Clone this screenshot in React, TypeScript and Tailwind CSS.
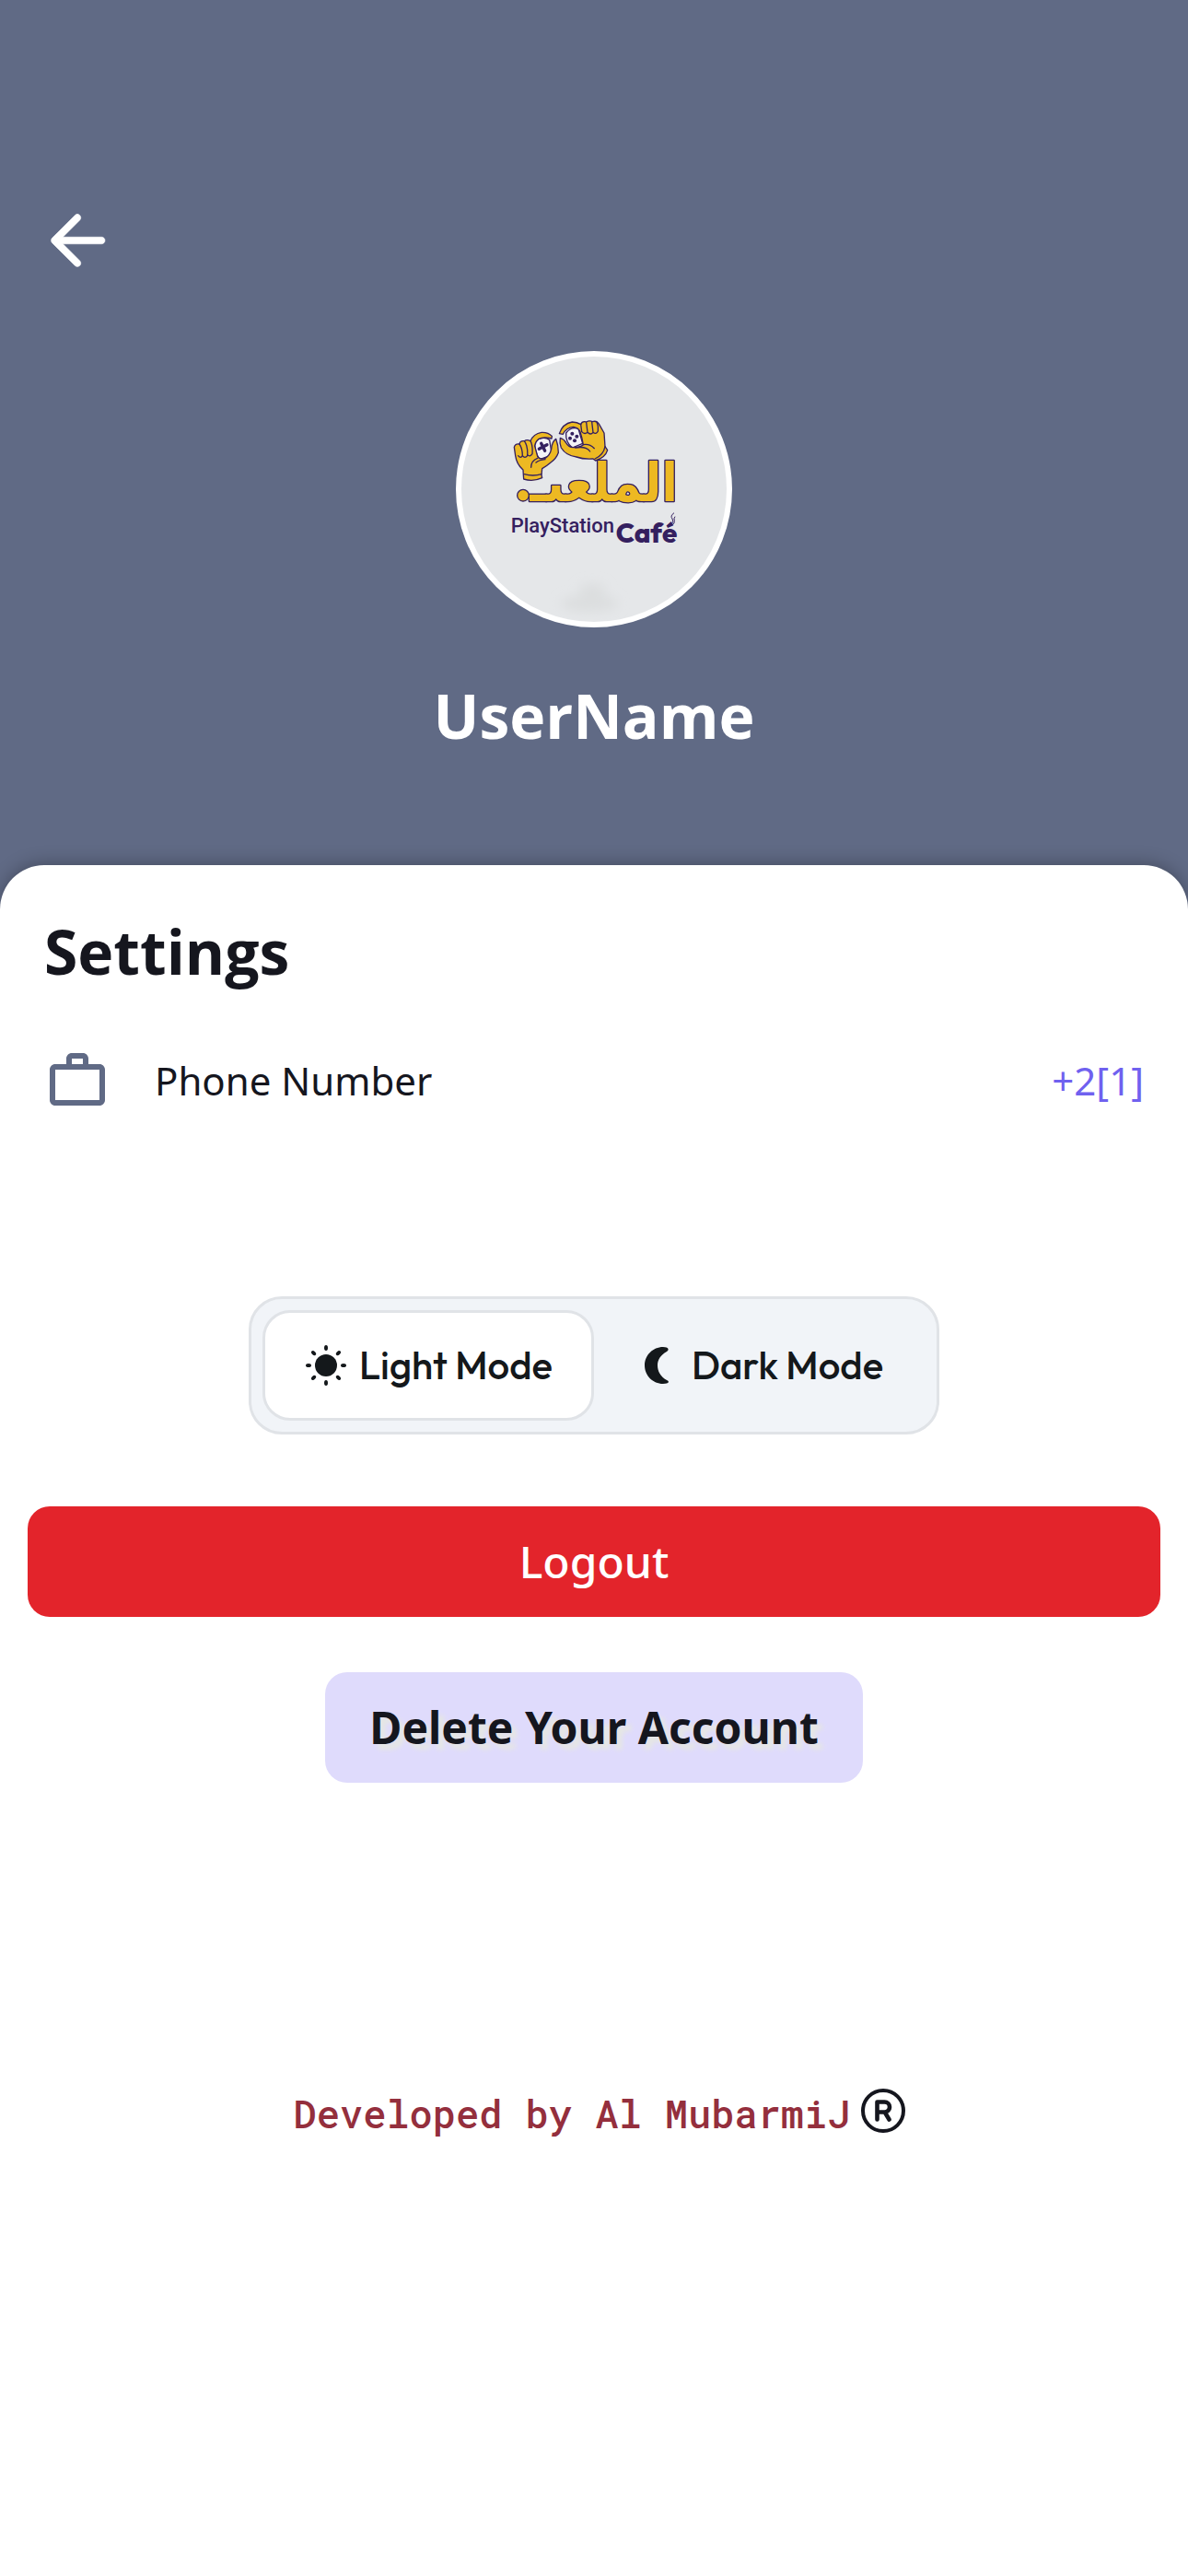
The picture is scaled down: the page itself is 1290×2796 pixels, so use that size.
import { useState } from 'react';

function CafeLogo() {
    return (
        <svg viewBox="63 51 864 864" className="w-full h-full" role="img" aria-label="الملعب PlayStation Café">
            <defs>
                <filter id="smudge" x="-50%" y="-50%" width="200%" height="200%">
                    <feGaussianBlur stdDeviation="18" />
                </filter>
            </defs>
            <rect x="63" y="51" width="864" height="864" fill="#e5e7e9" />
            <g fill="#dcdedf" filter="url(#smudge)">
                <ellipse cx="480" cy="855" rx="95" ry="28" />
                <ellipse cx="490" cy="810" rx="45" ry="20" />
            </g>

            {/* Left hand */}
            <g stroke="#34205f" strokeWidth="4" strokeLinejoin="round" strokeLinecap="round">
                <path fill="#f3f3f7" d="M302 326Q330 308 350 322L358 372L318 386Q300 360 302 326Z" />
                <path fill="#edb922" d="M265 436L264 420Q243 402 239 374L235 346Q238 334 252 336Q254 324 268 326Q276 320 288 326Q298 302 324 298Q346 297 358 310L357 318Q330 310 314 320Q304 328 302 342L311 376Q318 388 336 382Q352 372 356 352Q358 328 371 319Q379 340 379 364Q372 384 354 396Q340 408 326 416L324 436L326 446Q296 460 266 450Z" />
                <path fill="none" d="M252 336Q262 350 262 374Q256 384 248 374M268 326Q280 342 278 374Q270 384 262 374M288 326Q296 340 294 368Q286 380 278 370M311 382Q290 390 290 412M336 386Q316 388 306 396M268 434Q296 442 324 434" />
            </g>
            <path d="M316 352L342 338M323 334L335 358" stroke="#34205f" strokeWidth="10" strokeLinecap="round" />

            {/* Right hand */}
            <g stroke="#34205f" strokeWidth="4" strokeLinejoin="round" strokeLinecap="round">
                <path fill="#f3f3f7" d="M404 300Q420 278 444 286L458 334L424 348Q402 330 404 300Z" />
                <path fill="#edb922" d="M382 302Q392 270 424 264Q440 264 452 272Q456 260 470 264Q480 258 490 263Q504 258 512 272L528 300L531 344L539 356Q532 380 500 390L492 384Q460 386 438 378Q404 374 388 348Q382 332 385 316Q398 320 404 332Q414 350 434 346Q452 346 460 338Q456 314 450 296Q444 282 428 280Q404 282 394 304Z" />
                <path fill="none" d="M452 272L455 296Q464 306 474 298L470 266M474 298Q484 308 492 298L488 264M492 298Q502 306 508 294Q510 278 504 264M460 338Q480 334 496 350M434 348Q470 342 482 360M531 344Q526 372 498 384" />
            </g>
            <g fill="#34205f">
                <circle cx="424" cy="302" r="6" />
                <circle cx="439" cy="311" r="6" />
                <circle cx="417" cy="317" r="6" />
                <circle cx="432" cy="325" r="6" />
            </g>

            {/* Wordmark, the ball is the dot of the last letter */}
            <text
                x="768"
                y="522"
                direction="rtl"
                fontSize="172"
                fontWeight="700"
                fill="#edb922"
                stroke="#34205f"
                strokeWidth="8"
                strokeLinejoin="round"
                paintOrder="stroke"
                className="font-['DejaVu_Sans_Condensed','DejaVu_Sans',sans-serif]"
            >
                الملعٮـ
            </text>
            <circle cx="264" cy="503" r="19" fill="#edb922" stroke="#34205f" strokeWidth="4" />
            <text x="224" y="624" fontSize="66" fontWeight="500" fill="#34205f" className="font-['Roboto',sans-serif]">
                PlayStation
            </text>
            <text x="566" y="656" fontSize="88" fontWeight="800" fill="#34205f" className="font-['Outfit','Lato',sans-serif]">
                Café
            </text>
            <path d="M756 560Q742 570 750 579Q757 588 746 600M759 572Q754 578 757 586Q758 594 750 600" fill="none" stroke="#34205f" strokeWidth="3" />
        </svg>
    );
}

function SunIcon() {
    return (
        <svg viewBox="0 0 48 48" className="w-12 h-12" fill="#14181b" aria-hidden="true">
            <circle cx="24" cy="24" r="12" />
            {[0, 45, 90, 135, 180, 225, 270, 315].map((angle) => (
                <ellipse key={angle} cx="24" cy="5" rx="2" ry="3" transform={`rotate(${angle} 24 24)`} />
            ))}
        </svg>
    );
}

function MoonIcon() {
    return (
        <svg viewBox="2 0 48 48" className="w-12 h-12" fill="#14181b" aria-hidden="true">
            <path d="M31 4C20 4 11 13 11 24S20 44 31 44C38 44 38 41 35 40C28 36 25 30 25 24S28 13 35 9C38 7 37 4 31 4Z" />
        </svg>
    );
}

export default function ProfilePage() {
    const [mode, setMode] = useState('light');

    const modes = [
        { id: 'light', label: 'Light Mode', icon: <SunIcon /> },
        { id: 'dark', label: 'Dark Mode', icon: <MoonIcon /> },
    ];

    return (
        <div className="min-h-screen flex flex-col bg-[#606a85] font-['Noto_Sans','Open_Sans',sans-serif] text-[#15161e]">
            {/* Header */}
            <header className="flex flex-col items-center pt-[216px] pb-[118px]">
                <button aria-label="Back" className="self-start ml-[39px]">
                    <svg viewBox="0 0 24 24" className="block w-[90px] h-[90px]" fill="#fff">
                        <path d="M19 11H7.83l4.88-4.88c.39-.39.39-1.03 0-1.42a1 1 0 0 0-1.41 0l-6.59 6.59c-.39.39-.39 1.02 0 1.41l6.59 6.59c.39.39 1.02.39 1.41 0s.39-1.02 0-1.41L7.83 13H19c.55 0 1-.45 1-1s-.45-1-1-1z" stroke="#fff" strokeWidth="0.15" />
                    </svg>
                </button>
                <div className="w-[300px] h-[300px] mt-[75px] rounded-full border-6 border-white bg-white overflow-hidden">
                    <CafeLogo />
                </div>
                <h1 className="mt-[50px] font-['Open_Sans',sans-serif] text-[66px] leading-[90px] font-bold text-white">UserName</h1>
            </header>

            {/* Settings */}
            <main className="grow flex flex-col items-center bg-white rounded-t-[48px] pt-12 shadow-[0_-3px_18px_rgba(0,0,0,0.25)]">
                <h2 className="self-stretch px-12 font-['Open_Sans',sans-serif] text-[66px] leading-[90px] font-bold">Settings</h2>
                <div className="self-stretch flex items-center gap-12 px-12 mt-[60px] text-[42px] leading-[60px]">
                    <svg viewBox="0 0 24 24" className="w-[72px] h-[72px]" fill="#606a85" aria-hidden="true">
                        <path
                            fillRule="evenodd"
                            d="M14 6V4h-4v2zM4 8v11h16V8zm16-2c1.11 0 2 .89 2 2v11c0 1.11-.89 2-2 2H4c-1.11 0-2-.89-2-2V8c0-1.11.89-2 2-2h4V4c0-1.11.89-2 2-2h4c1.11 0 2 .89 2 2v2z"
                        />
                    </svg>
                    <span className="grow">Phone Number</span>
                    <span className="text-[#6f61ef]">+2[1]</span>
                </div>

                {/* Theme switch */}
                <div className="flex w-[750px] mt-[198px] p-3 rounded-[36px] border-3 border-[#e0e3e7] bg-[#f1f4f8] font-['Outfit','Lato',sans-serif] text-[#14181b]">
                    {modes.map((item) => (
                        <button
                            key={item.id}
                            aria-pressed={mode === item.id}
                            onClick={() => setMode(item.id)}
                            className={`flex-1 h-[120px] flex items-center justify-center gap-3 rounded-[30px] border-3 text-[42px] leading-[54px] font-medium ${mode === item.id ? 'bg-white border-[#e0e3e7]' : 'border-transparent'}`}
                        >
                            {item.icon}
                            <span>{item.label}</span>
                        </button>
                    ))}
                </div>

                {/* Account actions */}
                <div className="self-stretch flex flex-col items-center gap-[60px] px-[30px] mt-[78px] text-[48px] leading-[66px]">
                    <button className="w-full h-[120px] rounded-3xl bg-[#e3242b] font-medium text-white">Logout</button>
                    <button className="h-[120px] px-12 rounded-3xl bg-[#dfdbfc] font-bold [text-shadow:6px_6px_5px_#e6e7e3]">
                        Delete Your Account
                    </button>
                </div>

                <footer className="flex items-start gap-3 mt-[332px] pl-3 font-['Roboto_Mono','DejaVu_Sans_Mono',monospace] text-[42px] leading-[54px] font-medium text-[#942f3d]">
                    <span>Developed by Al MubarmiJ</span>
                    <svg viewBox="0 0 48 48" className="w-12 h-12" fill="none" stroke="#15161e" strokeLinecap="round" strokeLinejoin="round" aria-hidden="true">
                        <circle cx="24" cy="24" r="22" strokeWidth="4" />
                        <path d="M17.5 33.5V14.5h8a5 5 0 0 1 0 11h-8M26 26l4.500 7.500" strokeWidth="4.600" />
                    </svg>
                </footer>
            </main>
        </div>
    );
}
